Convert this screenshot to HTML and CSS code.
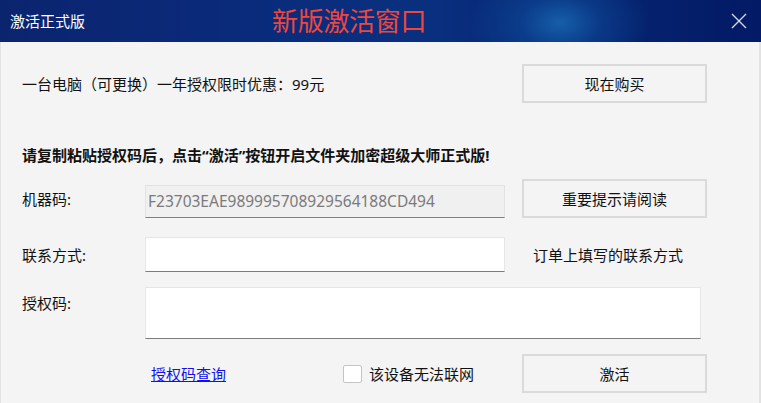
FILE: index.html
```html
<!DOCTYPE html>
<html lang="zh-CN">
<head>
<meta charset="utf-8">
<title>激活正式版</title>
<link rel="stylesheet" href="styles.css">
</head>
<body>
<div class="window">
  <div class="titlebar">
    <span class="title">激活正式版</span>
    <span class="headline">新版激活窗口</span>
    <span class="close">
      <svg width="16" height="16" viewBox="0 0 16 16"><path d="M1 1 L15 15 M15 1 L1 15" stroke="#d6d9e6" stroke-width="1.4" fill="none"/></svg>
    </span>
  </div>
  <div class="content">
    <div class="row row-offer">
      <span class="offer">一台电脑（可更换）一年授权限时优惠：99元</span>
      <button class="btn">现在购买</button>
    </div>
    <div class="notice">请复制粘贴授权码后，点击“激活”按钮开启文件夹加密超级大师正式版!</div>
    <div class="row row-machine">
      <span class="label">机器码:</span>
      <div class="field field-disabled">F23703EAE989995708929564188CD494</div>
      <button class="btn">重要提示请阅读</button>
    </div>
    <div class="row row-contact">
      <span class="label">联系方式:</span>
      <div class="field"></div>
      <span class="hint">订单上填写的联系方式</span>
    </div>
    <div class="row row-license">
      <span class="label label-top">授权码:</span>
      <div class="field field-area"></div>
    </div>
    <div class="row row-bottom">
      <span class="label"></span>
      <span class="query"><a class="link" href="#">授权码查询</a></span>
      <label class="check"><span class="box"></span>该设备无法联网</label>
      <button class="btn">激活</button>
    </div>
  </div>
</div>
</body>
</html>
```

FILE: styles.css
```css
html, body {
  margin: 0;
  padding: 0;
}
body {
  width: 761px;
  height: 403px;
  overflow: hidden;
  background: #f4f4f4;
  font-family: "Noto Sans", "Noto Sans CJK SC", sans-serif;
  font-size: 15px;
  color: #111;
}
.window {
  width: 761px;
  height: 403px;
  box-sizing: border-box;
  border-left: 1px solid #e2e2e2;
  border-right: 2px solid #e2e2e2;
  background: #f4f4f4;
}
.titlebar {
  height: 42px;
  margin: 0 -2px 0 -1px;
  display: flex;
  align-items: center;
  background:
    radial-gradient(ellipse 90px 60px at 560px 55%, rgba(24,104,178,0.85) 0%, rgba(14,78,158,0.5) 45%, rgba(8,50,130,0) 100%),
    linear-gradient(90deg, #0b246e 0%, #0a2a7a 30%, #09307f 55%, #06236f 80%, #031a66 100%);
}
.title {
  margin-left: 10px;
  color: #ffffff;
  font-size: 15px;
  line-height: 20px;
}
.headline {
  margin-left: 187px;
  color: #f0463c;
  font-size: 26px;
  line-height: 30px;
  letter-spacing: -0.3px;
}
.close {
  margin-left: auto;
  margin-right: 14px;
  width: 16px;
  height: 16px;
  display: flex;
}
.content {
  padding-left: 21px;
  padding-top: 22px;
}
.row {
  display: flex;
  align-items: center;
}
.row-offer {
  height: 39px;
}
.offer {
  width: 500px;
  line-height: 20px;
}
.btn {
  width: 185px;
  height: 39px;
  margin-left: auto;
  margin-right: 52px;
  box-sizing: border-box;
  border: 2px solid #dadada;
  background: #f4f4f4;
  font-family: "Noto Sans", "Noto Sans CJK SC", sans-serif;
  font-size: 15px;
  color: #111;
  padding: 0;
}
.notice {
  margin-top: 42px;
  line-height: 20px;
  font-weight: bold;
}
.row-machine {
  margin-top: 14px;
  height: 39px;
}
.label {
  width: 123px;
  flex: none;
  line-height: 20px;
}
.field {
  width: 360px;
  height: 35px;
  box-sizing: border-box;
  background: #ffffff;
  border: 1px solid #e6e6e6;
  border-bottom: 1px solid #7c7c7c;
  flex: none;
}
.field-disabled {
  align-self: flex-end;
  height: 33px;
  background: #f0f0f0;
  border-color: #e2e2e2;
  border-bottom-color: #808080;
  color: #7a7a7a;
  padding-left: 2px;
  line-height: 31px;
  font-size: 15.5px;
}
.row-contact {
  margin-top: 19px;
  height: 35px;
}
.hint {
  margin-left: 28px;
  line-height: 20px;
}
.row-license {
  margin-top: 15px;
  height: 52px;
  align-items: flex-start;
}
.label-top {
  padding-top: 6px;
}
.field-area {
  width: 556px;
  height: 52px;
}
.row-bottom {
  margin-top: 15px;
  height: 39px;
}
.query {
  width: 198px;
  padding-left: 6px;
  box-sizing: border-box;
  flex: none;
  line-height: 20px;
}
.link {
  color: #1010f0;
  text-decoration: underline;
}
.check {
  display: flex;
  align-items: center;
  line-height: 20px;
}
.box {
  width: 19px;
  height: 18px;
  box-sizing: border-box;
  border: 1px solid #c4c4c4;
  border-radius: 2px;
  background: #ffffff;
  margin-right: 7px;
}
```
